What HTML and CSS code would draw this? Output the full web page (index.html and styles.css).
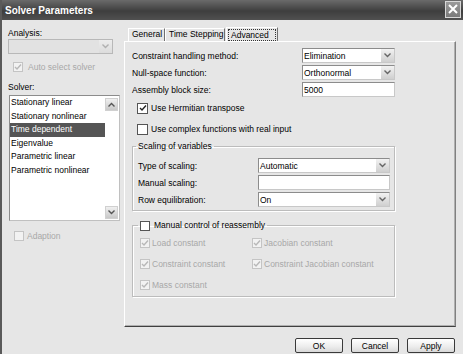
FILE: index.html
```html
<!DOCTYPE html>
<html lang="en">
  <head>
    <meta charset="UTF-8" />
    <title>Solver Parameters</title>
    <link rel="stylesheet" href="styles.css">
  </head>
  <body>
    <div class="window">
      <div class="titlebar">
        <span class="title">Solver Parameters</span>
        <span class="close">
          <svg width="10" height="10" viewBox="0 0 10 10"><path d="M1 1 L9 9 M9 1 L1 9" stroke="#fff" stroke-width="2"/></svg>
        </span>
      </div>

      <div class="main">
        <div class="sidebar">
          <div class="label">Analysis:</div>
          <div class="combo disabled analysis">
            <span class="value"></span>
            <span class="arrow"><svg width="7" height="5" viewBox="0 0 7 5"><path d="M0.5 0.5 L3.5 3.5 L6.5 0.5" fill="none" stroke="#b0b0b0" stroke-width="1.4"/></svg></span>
          </div>
          <div class="check disabled auto">
            <span class="box"><svg width="8" height="8" viewBox="0 0 8 8"><path d="M1 4 L3 6 L7 1.5" fill="none" stroke="#b8b8b8" stroke-width="1.4"/></svg></span>
            Auto select solver
          </div>
          <div class="label solver-label">Solver:</div>
          <div class="listbox">
            <ul class="items">
              <li>Stationary linear</li>
              <li>Stationary nonlinear</li>
              <li class="selected">Time dependent</li>
              <li>Eigenvalue</li>
              <li>Parametric linear</li>
              <li>Parametric nonlinear</li>
            </ul>
            <div class="scrollbar">
              <span class="scroll-btn"><svg width="7" height="5" viewBox="0 0 7 5"><path d="M0.5 4.5 L3.5 1.5 L6.5 4.5" fill="none" stroke="#555" stroke-width="1.4"/></svg></span>
              <span class="scroll-btn"><svg width="7" height="5" viewBox="0 0 7 5"><path d="M0.5 0.5 L3.5 3.5 L6.5 0.5" fill="none" stroke="#555" stroke-width="1.4"/></svg></span>
            </div>
          </div>
          <div class="check disabled adaption">
            <span class="box"></span>
            Adaption
          </div>
        </div>

        <div class="tabs-area">
          <div class="tabs">
            <span class="tab general">General</span>
            <span class="tab stepping">Time Stepping</span>
            <span class="tab active"><span class="focus">Advanced</span></span>
          </div>
          <div class="panel">
            <div class="form">
              <div class="row">
                <span>Constraint handling method:</span>
                <div class="combo small">
                  <span class="value">Elimination</span>
                  <span class="arrow"><svg width="7" height="5" viewBox="0 0 7 5"><path d="M0.5 0.5 L3.5 3.5 L6.5 0.5" fill="none" stroke="#666" stroke-width="1.4"/></svg></span>
                </div>
              </div>
              <div class="row">
                <span>Null-space function:</span>
                <div class="combo small">
                  <span class="value">Orthonormal</span>
                  <span class="arrow"><svg width="7" height="5" viewBox="0 0 7 5"><path d="M0.5 0.5 L3.5 3.5 L6.5 0.5" fill="none" stroke="#666" stroke-width="1.4"/></svg></span>
                </div>
              </div>
              <div class="row">
                <span>Assembly block size:</span>
                <div class="textbox small">5000</div>
              </div>

              <div class="check hermitian">
                <span class="box"><svg width="8" height="8" viewBox="0 0 8 8"><path d="M1 4 L3 6 L7 1.5" fill="none" stroke="#222" stroke-width="1.4"/></svg></span>
                Use Hermitian transpose
              </div>
              <div class="check complex">
                <span class="box"></span>
                Use complex functions with real input
              </div>

              <fieldset class="group scaling">
                <legend>Scaling of variables</legend>
                <div class="row">
                  <span>Type of scaling:</span>
                  <div class="combo wide">
                    <span class="value">Automatic</span>
                    <span class="arrow"><svg width="7" height="5" viewBox="0 0 7 5"><path d="M0.5 0.5 L3.5 3.5 L6.5 0.5" fill="none" stroke="#666" stroke-width="1.4"/></svg></span>
                  </div>
                </div>
                <div class="row">
                  <span>Manual scaling:</span>
                  <div class="textbox wide"></div>
                </div>
                <div class="row">
                  <span>Row equilibration:</span>
                  <div class="combo wide">
                    <span class="value">On</span>
                    <span class="arrow"><svg width="7" height="5" viewBox="0 0 7 5"><path d="M0.5 0.5 L3.5 3.5 L6.5 0.5" fill="none" stroke="#666" stroke-width="1.4"/></svg></span>
                  </div>
                </div>
              </fieldset>

              <fieldset class="group reassembly">
                <legend class="check">
                  <span class="box"></span>
                  Manual control of reassembly
                </legend>
                <div class="check-grid">
                  <div class="check disabled">
                    <span class="box"><svg width="8" height="8" viewBox="0 0 8 8"><path d="M1 4 L3 6 L7 1.5" fill="none" stroke="#b8b8b8" stroke-width="1.4"/></svg></span>
                    Load constant
                  </div>
                  <div class="check disabled">
                    <span class="box"><svg width="8" height="8" viewBox="0 0 8 8"><path d="M1 4 L3 6 L7 1.5" fill="none" stroke="#b8b8b8" stroke-width="1.4"/></svg></span>
                    Jacobian constant
                  </div>
                  <div class="check disabled">
                    <span class="box"><svg width="8" height="8" viewBox="0 0 8 8"><path d="M1 4 L3 6 L7 1.5" fill="none" stroke="#b8b8b8" stroke-width="1.4"/></svg></span>
                    Constraint constant
                  </div>
                  <div class="check disabled">
                    <span class="box"><svg width="8" height="8" viewBox="0 0 8 8"><path d="M1 4 L3 6 L7 1.5" fill="none" stroke="#b8b8b8" stroke-width="1.4"/></svg></span>
                    Constraint Jacobian constant
                  </div>
                  <div class="check disabled">
                    <span class="box"><svg width="8" height="8" viewBox="0 0 8 8"><path d="M1 4 L3 6 L7 1.5" fill="none" stroke="#b8b8b8" stroke-width="1.4"/></svg></span>
                    Mass constant
                  </div>
                </div>
              </fieldset>
            </div>
          </div>
        </div>
      </div>

      <div class="buttons">
        <span class="button">OK</span>
        <span class="button">Cancel</span>
        <span class="button">Apply</span>
      </div>
    </div>
  </body>
</html>
```

FILE: styles.css
```css
* {
    box-sizing: border-box;
}

body {
    margin: 0;
    width: 463px;
    height: 354px;
    overflow: hidden;
    background-color: #e6e6e6;
    font-family: "Liberation Sans", Arial, sans-serif;
    font-size: 8.5px;
    color: #000;
}

.window {
    width: 463px;
    height: 354px;
    display: flex;
    flex-direction: column;
    border-left: 2px solid #5a5a5a;
    background-color: #e6e6e6;
}

/* title bar */
.titlebar {
    height: 20px;
    flex: none;
    display: flex;
    align-items: center;
    justify-content: space-between;
    padding: 0 2px 0 3px;
    background: linear-gradient(#6a6a6a, #464646 45%, #3e3e3e 55%, #505050);
}

.title {
    color: #fff;
    font-size: 10px;
    font-weight: bold;
}

.close {
    width: 16px;
    height: 17px;
    margin-top: -2px;
    display: flex;
    align-items: center;
    justify-content: center;
    border: 1px solid #d8d8d8;
    background: linear-gradient(#9a9a9a, #7a7a7a);
}

.main {
    display: flex;
    padding-top: 7px;
}

/* left column */
.sidebar {
    width: 118px;
    padding-left: 6px;
    flex: none;
}

.label {
    height: 12px;
    line-height: 12px;
}

.solver-label {
    margin-top: 8px;
}

.combo, .textbox {
    height: 15px;
    flex: none;
    display: flex;
    align-items: center;
    padding-left: 1px;
    white-space: nowrap;
    background-color: #fff;
    border: 1px solid #8c8c8c;
    border-right-color: #c8c8c8;
    border-bottom-color: #c8c8c8;
}

.combo .value {
    flex: 1;
}

.combo .arrow {
    width: 13px;
    height: 13px;
    display: flex;
    align-items: center;
    justify-content: center;
    background: linear-gradient(#f2f2f2, #cfcfcf);
}

.combo.disabled {
    background-color: #e2e2e2;
    border-color: #b8b8b8;
}

.combo.disabled .arrow {
    background: linear-gradient(#ececec, #dcdcdc);
}

.analysis {
    width: 105px;
}

.check {
    display: flex;
    align-items: center;
    height: 12px;
    white-space: nowrap;
}

.check .box {
    width: 10px;
    height: 10px;
    flex: none;
    margin-right: 3px;
    display: flex;
    align-items: center;
    justify-content: center;
    background-color: #fff;
    border: 1px solid #555;
}

.check.disabled {
    color: #a8a8a8;
}

.check.disabled .box {
    border-color: #c4c4c4;
    background-color: #f2f2f2;
}

.auto {
    margin-top: 7px;
    margin-left: 5px;
}

.auto .box {
    margin-right: 5px;
}

.adaption {
    margin-top: 9px;
    margin-left: 6px;
}

.adaption .box {
    background-color: #fff;
}

.listbox {
    width: 111px;
    height: 126px;
    margin-top: 2px;
    margin-left: 1px;
    display: flex;
    background-color: #fff;
    border: 1px solid #8c8c8c;
    border-right-color: #c0c0c0;
    border-bottom-color: #c0c0c0;
}

.items {
    flex: 1;
    margin: 0;
    padding: 0;
    list-style: none;
}

.items li {
    height: 13.6px;
    line-height: 13.6px;
    padding-left: 1px;
    white-space: nowrap;
}

.items li.selected {
    background-color: #555;
    color: #fff;
}

.scrollbar {
    width: 14px;
    display: flex;
    flex-direction: column;
    justify-content: space-between;
    padding: 2px 1px 1px 0;
}

.scroll-btn {
    width: 13px;
    height: 13px;
    display: flex;
    align-items: center;
    justify-content: center;
    background: linear-gradient(#f0f0f0, #c8c8c8);
    border: 1px solid #d0d0d0;
}

/* tabs */
.tabs-area {
    width: 332px;
    margin-left: 4px;
    flex: none;
}

.tabs {
    height: 14px;
    display: flex;
    align-items: flex-end;
    padding-left: 4px;
}

.tab {
    height: 13px;
    line-height: 11px;
    padding: 0 3px;
    border: 1px solid #fff;
    border-right-color: #707070;
    border-bottom: none;
    white-space: nowrap;
}

.tab.general {
    width: 37px;
}

.tab.stepping {
    width: 60px;
}

.tab.active {
    width: 52px;
    height: 14px;
    margin-left: 1px;
    padding: 1px 1px 0;
}

.tab .focus {
    display: block;
    height: 12px;
    line-height: 10px;
    padding: 0 2px;
    border: 1px dotted #333;
}

.panel {
    height: 286px;
    border: 1px solid #fff;
    border-right-color: #808080;
    border-bottom-color: #404040;
    box-shadow: inset -1px -1px 0 #b0b0b0;
}

.form {
    width: 270px;
    padding: 6px 0 0 7px;
}

.row {
    height: 15px;
    display: flex;
    align-items: center;
    justify-content: space-between;
    margin-bottom: 2px;
    white-space: nowrap;
}

.small {
    width: 93px;
}

.hermitian {
    margin-top: 5px;
    margin-left: 5px;
}

.hermitian .box, .complex .box {
    width: 11px;
    height: 11px;
}

.complex {
    margin-top: 9px;
    margin-left: 5px;
}

/* group boxes */
.group {
    margin: 0;
    min-width: 0;
    border: 1px solid #bcbcbc;
    box-shadow: 1px 1px 0 #fff, inset 1px 1px 0 #fff;
}

.group legend {
    height: 11px;
    line-height: 11px;
    margin-left: -2px;
    padding: 0 2px;
}

.scaling {
    width: 263px;
    margin-top: 6px;
    padding: 6px 4px 1px 5px;
}

.wide {
    width: 132px;
}

.reassembly {
    width: 263px;
    margin-top: 8px;
    padding: 5px 4px 5px 7px;
}

.reassembly legend {
    height: 13px;
    margin-left: -2px;
}

.reassembly legend .box {
    margin-right: 4px;
}

.check-grid {
    display: grid;
    grid-template-columns: 112px 1fr;
    row-gap: 9px;
}

.check-grid .box {
    margin-right: 2px;
}

/* dialog buttons */
.buttons {
    display: flex;
    justify-content: flex-end;
    gap: 8px;
    margin-top: 11px;
    padding-right: 8px;
}

.button {
    width: 48px;
    height: 15px;
    display: flex;
    align-items: center;
    justify-content: center;
    border: 1px solid #3a3a3a;
    border-radius: 2px;
    background: linear-gradient(#ffffff, #ececec 60%, #d8d8d8);
}
```
